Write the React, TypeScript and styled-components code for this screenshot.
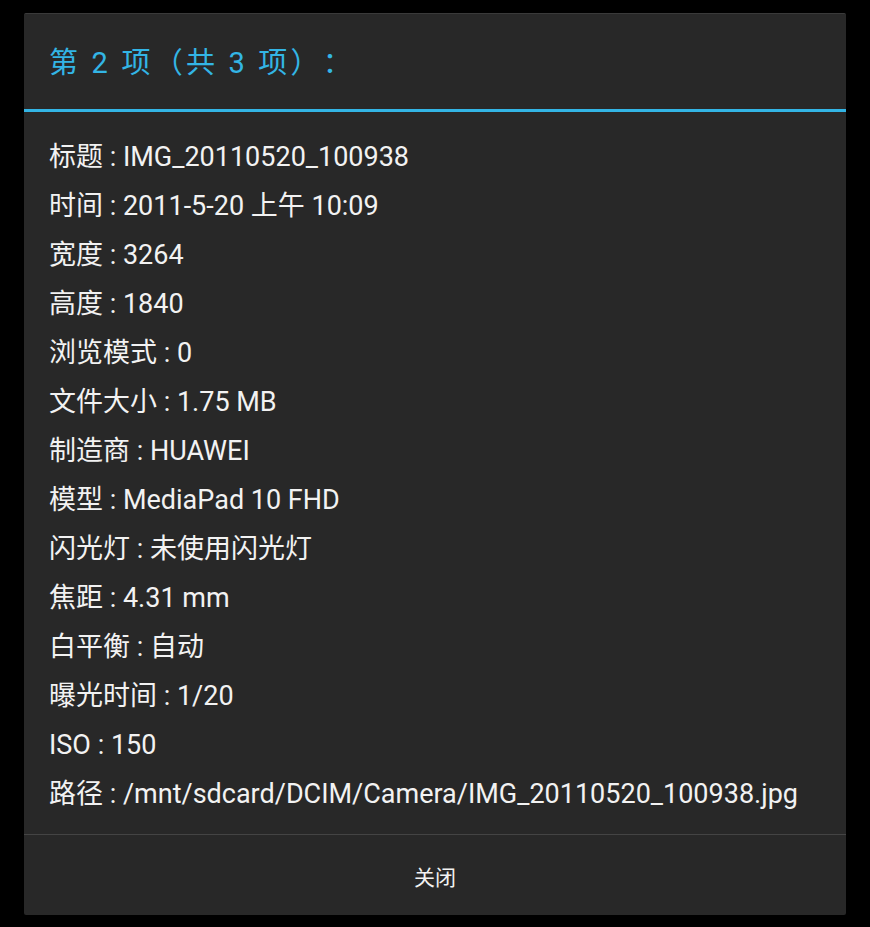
import * as React from "react";
import styled, { createGlobalStyle } from "styled-components";

const GlobalStyle = createGlobalStyle`
  html, body {
    margin: 0;
    padding: 0;
    background: #000;
    height: 100%;
  }
  body {
    font-family: Roboto, "Noto Sans CJK SC", sans-serif;
    text-spacing-trim: space-all;
  }
`;

const rows: [string, string][] = [
  ["标题", "IMG_20110520_100938"],
  ["时间", "2011-5-20 上午 10:09"],
  ["宽度", "3264"],
  ["高度", "1840"],
  ["浏览模式", "0"],
  ["文件大小", "1.75 MB"],
  ["制造商", "HUAWEI"],
  ["模型", "MediaPad 10 FHD"],
  ["闪光灯", "未使用闪光灯"],
  ["焦距", "4.31 mm"],
  ["白平衡", "自动"],
  ["曝光时间", "1/20"],
  ["ISO", "150"],
  ["路径", "/mnt/sdcard/DCIM/Camera/IMG_20110520_100938.jpg"],
];

export default function App() {
  return (
    <>
      <GlobalStyle />
      <Page>
        <Dialog>
          <TitleBar>
            <Title>第 2 项（共 3 项）：</Title>
          </TitleBar>
          <Body>
            {rows.map(([k, v]) => (
              <Row key={k}>
                {k} : {v}
              </Row>
            ))}
          </Body>
          <ButtonBar>
            <Button>关闭</Button>
          </ButtonBar>
        </Dialog>
      </Page>
    </>
  );
}

const Page = styled.div`
  padding: 13px 24px 12px 24px;
`;

const Dialog = styled.div`
  width: 822px;
  background: #282828;
  border-radius: 2px;
  border-top: 1px solid #3a3a3a;
  display: flex;
  flex-direction: column;
`;

const TitleBar = styled.div`
  display: flex;
  align-items: center;
  padding: 0 25px 4px 25px;
  border-bottom: 3px solid #33b5e5;
  box-sizing: border-box;
  height: 98px;
`;

const Title = styled.div`
  color: #33b5e5;
  font-size: 29px;
  letter-spacing: 3.2px;
  text-spacing-trim: space-all;
  font-family: Roboto, "Noto Sans CJK SC", sans-serif;
`;

const Body = styled.div`
  padding: 21px 25px 15px 25px;
  display: flex;
  flex-direction: column;
`;

const Row = styled.div`
  height: 49px;
  line-height: 49px;
  font-size: 27px;
  color: #f2f2f2;
  white-space: nowrap;
`;

const ButtonBar = styled.div`
  border-top: 1px solid #444;
  height: 80px;
  display: flex;
`;

const Button = styled.div`
  flex: 1;
  display: flex;
  align-items: center;
  justify-content: center;
  color: #f2f2f2;
  font-size: 21px;
  padding-top: 2px;
`;
